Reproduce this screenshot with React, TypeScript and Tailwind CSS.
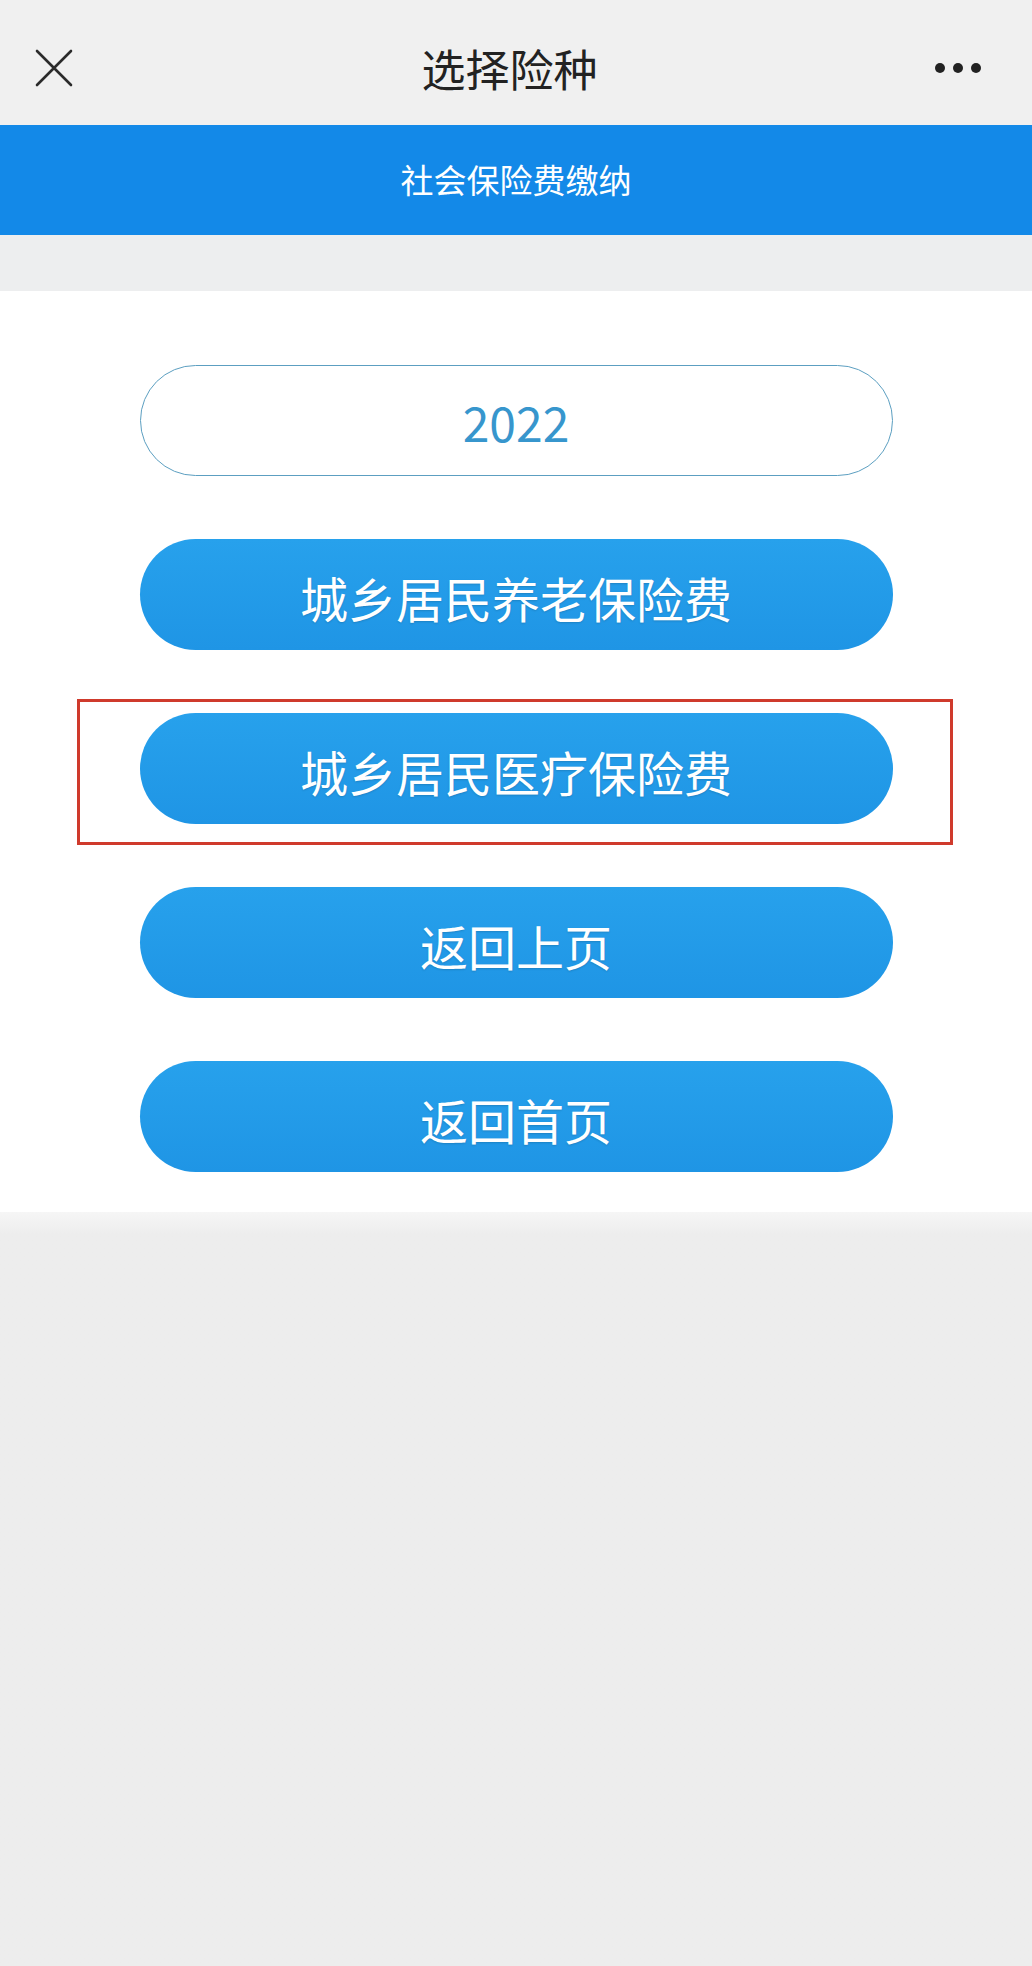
import React from 'react';

const font = "font-['Noto_Sans_CJK_SC','Noto_Sans',sans-serif]";

const options = [
  { label: '城乡居民养老保险费' },
  { label: '城乡居民医疗保险费', highlighted: true },
  { label: '返回上页' },
  { label: '返回首页' },
];

function PillButton({ label, highlighted }: { label: string; highlighted?: boolean }) {
  return (
    <div className="relative">
      <button
        type="button"
        className="flex h-[111px] w-[753px] items-center justify-center rounded-full bg-gradient-to-b from-[#27a1ec] to-[#1f95e5] pt-[4px] text-[48px] text-white [text-shadow:0_1px_2px_rgba(0,0,0,0.15)]"
      >
        {label}
      </button>
      {/* annotation frame drawn over the screenshot */}
      {highlighted && (
        <div className="pointer-events-none absolute -bottom-[21px] -left-[63px] -right-[60px] -top-[14px] border-[3px] border-[#cf3a2c]" />
      )}
    </div>
  );
}

export default function App() {
  return (
    <div className={`${font} flex min-h-[1966px] w-[1032px] flex-col bg-[#eeeeee]`}>
      {/* nav bar */}
      <div className="flex h-[125px] items-center justify-between bg-[#f0f0f0] pl-[34px] pr-[51px] pt-[10px]">
        <svg width="40" height="40" viewBox="0 0 40 40" className="text-[#2b2b2b]">
          <path d="M3 3 L37 37 M37 3 L3 37" stroke="currentColor" strokeWidth="2.6" strokeLinecap="round" />
        </svg>
        <h1 className="ml-[10px] text-[44px] font-normal text-[#222222]">选择险种</h1>
        <div className="flex w-[46px] items-center justify-between">
          <span className="h-[10px] w-[10px] rounded-full bg-[#222222]" />
          <span className="h-[10px] w-[10px] rounded-full bg-[#222222]" />
          <span className="h-[10px] w-[10px] rounded-full bg-[#222222]" />
        </div>
      </div>

      {/* blue banner */}
      <div className="flex h-[110px] items-center justify-center bg-[#1389e8] text-[33px] text-white">
        社会保险费缴纳
      </div>

      <div className="h-[56px] bg-[#edeeef]" />

      {/* options panel */}
      <div className="flex flex-col items-center gap-[63px] bg-white pb-[40px] pt-[74px]">
        <div className="flex h-[111px] w-[753px] items-center justify-center rounded-full border-[1.5px] border-[#5c9fc1] text-[48px] text-[#3796cd]">
          2022
        </div>
        {options.map((o) => (
          <PillButton key={o.label} label={o.label} highlighted={o.highlighted} />
        ))}
      </div>

      <div className="flex-1 bg-gradient-to-b from-[#f6f6f6] to-[#ededed] to-[3%]" />
    </div>
  );
}
